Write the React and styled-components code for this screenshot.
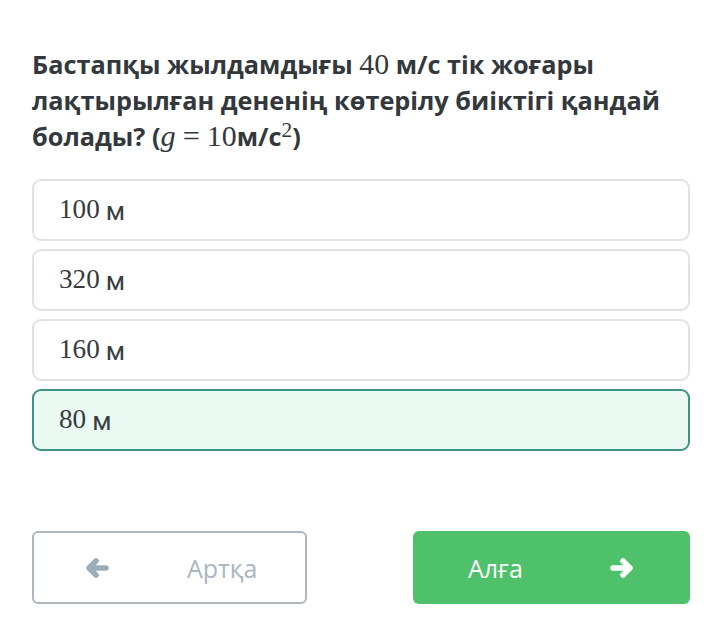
import styled, { createGlobalStyle } from "styled-components";

const GlobalStyle = createGlobalStyle`
    body {
        margin: 0;
        background: #ffffff;
        font-family: 'Open Sans', sans-serif;
    }
`

const answers = [
    { value: "100", selected: false },
    { value: "320", selected: false },
    { value: "160", selected: false },
    { value: "80", selected: true },
];

function Arrow({ dir }) {
    return (
        <svg viewBox="0 0 24 20" fill="none" stroke="currentColor" strokeWidth="5.5" strokeLinecap="round" strokeLinejoin="round">
            {dir === "left"
                ? <path d="M21 10H4M11 3L4 10L11 17" />
                : <path d="M3 10H20M13 3L20 10L13 17" />}
        </svg>
    );
}

export default function App() {
    return (
        <>
            <GlobalStyle />
            <Page>
                <Question>
                    Бастапқы жылдамдығы <Num>40</Num> м/с тік жоғары лақтырылған дененің көтерілу биіктігі қандай болады? (<Var>g</Var><Eq>=</Eq><Num>10</Num>м/с<Sup>2</Sup>)
                </Question>
                <Answers>
                    {answers.map((a) => (
                        <Answer key={a.value} selected={a.selected}>
                            <Num>{a.value}</Num>
                            <Unit>м</Unit>
                        </Answer>
                    ))}
                </Answers>
                <Footer>
                    <BackButton>
                        <Arrow dir="left" />
                        <span>Артқа</span>
                    </BackButton>
                    <NextButton>
                        <span>Алға</span>
                        <Arrow dir="right" />
                    </NextButton>
                </Footer>
            </Page>
        </>
    );
}

const Page = styled.div`
    width: 658px;
    padding: 46px 29px 0 32px;
    display: flex;
    flex-direction: column;
`

const Question = styled.h1`
    margin: 0;
    font-family: 'Open Sans', sans-serif;
    font-weight: 700;
    font-size: 25.3px;
    line-height: 36px;
    color: #33383d;
`

const Num = styled.span`
    font-family: 'Liberation Serif', serif;
    font-weight: 400;
    font-size: 1.18em;
    line-height: 1;
`

const Var = styled.span`
    font-family: 'Liberation Serif', serif;
    font-style: italic;
    font-weight: 400;
    font-size: 1.2em;
    line-height: 1;
`

const Eq = styled.span`
    font-family: 'Liberation Serif', serif;
    font-weight: 400;
    font-size: 1.2em;
    line-height: 1;
    margin: 0 7px;
`

const Sup = styled.sup`
    font-family: 'Liberation Serif', serif;
    font-weight: 400;
    font-size: 0.85em;
    line-height: 0;
`

const Answers = styled.div`
    margin-top: 25px;
    display: flex;
    flex-direction: column;
    gap: 8px;
`

const Answer = styled.div`
    height: 62px;
    box-sizing: border-box;
    border: 2px solid ${(p) => (p.selected ? "#3f9181" : "#dfe3e6")};
    background-color: ${(p) => (p.selected ? "#eafaf2" : "#ffffff")};
    border-radius: 9px;
    display: flex;
    align-items: center;
    gap: 6px;
    padding-left: 25px;
    color: #363b40;
    font-size: 23px;
`

const Unit = styled.span`
    font-family: Roboto, sans-serif;
    font-size: 26px;
    color: #3a3f44;
    padding-top: 2px;
`

const Footer = styled.div`
    margin-top: 80px;
    display: flex;
    justify-content: space-between;
`

const BackButton = styled.div`
    width: 275px;
    height: 73px;
    box-sizing: border-box;
    border: 2px solid #aab7c0;
    border-radius: 6px;
    display: flex;
    align-items: center;
    padding-left: 51px;
    gap: 78px;
    color: #a9b6bf;
    font-family: 'Open Sans', sans-serif;
    font-size: 25px;
    svg {
        width: 24px;
        height: 20px;
        color: #9badb9;
    }
`

const NextButton = styled.div`
    width: 277px;
    height: 73px;
    box-sizing: border-box;
    background-color: #4fc16a;
    border-radius: 6px;
    display: flex;
    align-items: center;
    justify-content: space-between;
    padding: 0 56px 0 55px;
    color: #ffffff;
    font-family: 'Open Sans', sans-serif;
    font-size: 25px;
    svg {
        width: 24px;
        height: 20px;
    }
`
